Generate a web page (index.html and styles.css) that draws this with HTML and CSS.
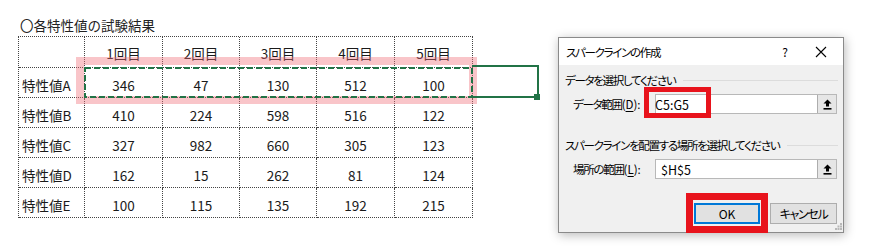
FILE: index.html
```html
<!DOCTYPE html>
<html lang="ja">
<head>
<meta charset="utf-8">
<link rel="stylesheet" href="styles.css">
</head>
<body>
<div class="page">
  <div class="sheet">
    <div class="title">〇各特性値の試験結果</div>
    <div class="table-wrap">
      <div class="grid">
        <div class="c h"></div><div class="c h n">1回目</div><div class="c h n">2回目</div><div class="c h n">3回目</div><div class="c h n">4回目</div><div class="c h n">5回目</div>
        <div class="c l">特性値A</div><div class="c n">346</div><div class="c n">47</div><div class="c n">130</div><div class="c n">512</div><div class="c n">100</div>
        <div class="c l">特性値B</div><div class="c n">410</div><div class="c n">224</div><div class="c n">598</div><div class="c n">516</div><div class="c n">122</div>
        <div class="c l">特性値C</div><div class="c n">327</div><div class="c n">982</div><div class="c n">660</div><div class="c n">305</div><div class="c n">123</div>
        <div class="c l">特性値D</div><div class="c n">162</div><div class="c n">15</div><div class="c n">262</div><div class="c n">81</div><div class="c n">124</div>
        <div class="c l">特性値E</div><div class="c n">100</div><div class="c n">115</div><div class="c n">135</div><div class="c n">192</div><div class="c n">215</div>
      </div>
      <div class="pink"></div>
      <svg class="sel" width="540" height="80" viewBox="0 0 540 80">
        <rect x="67" y="32" width="387" height="29" fill="none" stroke="#217346" stroke-width="2" stroke-dasharray="6 3"/>
        <polyline points="454,30 520,30 520,61 454,61" fill="none" stroke="#217346" stroke-width="2"/>
        <rect x="516" y="58" width="6" height="6" fill="#217346"/>
      </svg>
    </div>
  </div>

  <div class="dialog">
    <div class="titlebar">
      <span class="ttext jp">スパークラインの作成</span>
      <span class="help">?</span>
      <svg class="close" width="12" height="12" viewBox="0 0 12 12"><path d="M1 1L11 11M11 1L1 11" stroke="#000" stroke-width="1.1" fill="none"/></svg>
    </div>
    <div class="body">
      <div class="group">
        <span class="gtext jp">データを選択してください</span><span class="rule"></span>
      </div>
      <div class="frow">
        <span class="flabel"><span class="jp">データ範囲</span>(<u>D</u>):</span>
        <div class="field first">
          <span class="val">C5:G5</span>
          <span class="pick"><svg width="9" height="11" viewBox="0 0 9 11"><path d="M4.5 0.5L8.5 4.5H6V7.5H3V4.5H0.5Z" fill="#000"/><rect x="0.5" y="9" width="8" height="1.6" fill="#000"/></svg></span>
        </div>
      </div>
      <div class="group g2">
        <span class="gtext jp">スパークラインを配置する場所を選択してください</span><span class="rule"></span>
      </div>
      <div class="frow">
        <span class="flabel"><span class="jp">場所の範囲</span>(<u>L</u>):</span>
        <div class="field">
          <span class="val">$H$5</span>
          <span class="pick"><svg width="9" height="11" viewBox="0 0 9 11"><path d="M4.5 0.5L8.5 4.5H6V7.5H3V4.5H0.5Z" fill="#000"/><rect x="0.5" y="9" width="8" height="1.6" fill="#000"/></svg></span>
        </div>
      </div>
      <div class="buttons">
        <span class="btn ok">OK</span>
        <span class="btn"><span class="jp">キャンセル</span></span>
      </div>
      <svg class="grip" width="7" height="7" viewBox="0 0 7 7">
        <rect x="5" y="0" width="2" height="2" fill="#b8b8b8"/>
        <rect x="2.5" y="2.5" width="2" height="2" fill="#b8b8b8"/><rect x="5" y="2.5" width="2" height="2" fill="#b8b8b8"/>
        <rect x="0" y="5" width="2" height="2" fill="#b8b8b8"/><rect x="2.5" y="5" width="2" height="2" fill="#b8b8b8"/><rect x="5" y="5" width="2" height="2" fill="#b8b8b8"/>
      </svg>
    </div>
    <div class="mark mark1"></div>
    <div class="mark mark2"></div>
  </div>
</div>
</body>
</html>
```
FILE: styles.css
```css
* { box-sizing: border-box; }
html, body { margin: 0; padding: 0; background: #fff; }
body { width: 886px; height: 248px; overflow: hidden; font-family: "Noto Sans CJK JP", "Noto Sans", sans-serif; color: #000; }
.page { position: relative; width: 886px; height: 248px; }

.sheet { padding: 15px 0 0 18px; }
.title { font-size: 13.5px; line-height: 20px; height: 21px; padding-left: 2px; color: #222; }

.table-wrap { position: relative; width: 455px; }
.grid {
  display: grid;
  grid-template-columns: 66px 78px 77px 77px 78px 78px;
  grid-template-rows: 31px 30px 30px 30px 30px 30px;
  border-left: 1px dotted #444;
  border-top: 1px dotted #444;
  width: 455px;
}
.c {
  border-right: 1px dotted #444;
  border-bottom: 1px dotted #444;
  font-size: 13.5px;
  display: flex;
  align-items: center;
  padding-top: 5px;
  color: #1a1a1a;
}
.c.h { padding-top: 2px; }
.c.n { justify-content: center; }
.c.l { padding-left: 3px; }

.pink {
  position: absolute;
  left: 58px; top: 21px;
  width: 401px; height: 47px;
  border: 8px solid rgba(240, 110, 120, 0.4);
}
.sel { position: absolute; left: 0; top: 0; overflow: visible; }

.dialog {
  position: absolute;
  left: 558px; top: 37px;
  width: 286px; height: 196px;
  border: 1px solid #8a8a8a;
  background: #f0f0f0;
  box-shadow: 1px 2px 10px rgba(0, 0, 0, 0.28);
  font-family: "Noto Sans CJK JP", "Noto Sans", sans-serif;
  font-feature-settings: "palt";
  font-size: 11.5px;
  display: flex;
  flex-direction: column;
}
.jp { letter-spacing: -1.3px; }
.titlebar {
  height: 27px;
  background: #fff;
  display: flex;
  align-items: center;
  padding-left: 7px;
  flex: none;
}
.ttext { flex: 1; }
.help { width: 12px; margin-right: 24px; text-align: center; font-size: 12px; }
.close { margin-right: 16px; }

.body { position: relative; flex: 1; display: flex; flex-direction: column; padding: 7px 5px 0 6px; }
.group { display: flex; align-items: center; height: 16px; line-height: 16px; }
.g2 { margin-top: 23px; }
.gtext { flex: none; margin-right: 8px; }
.rule { flex: 1; height: 1px; background: #dcdcdc; }

.frow { display: flex; align-items: center; height: 20px; margin-top: 6px; padding-left: 8px; padding-right: 1px; }
.flabel { width: 82px; flex: none; }
.flabel u { text-decoration-thickness: 1px; text-underline-offset: 2px; }
.field {
  flex: 1;
  height: 20px;
  background: #fff;
  border: 1px solid #b8b8b8;
  display: flex;
  align-items: center;
}
.val { flex: 1; padding-left: 5px; font-size: 12.5px; }
.first .val { padding-left: 0; margin-left: -1px; }
.pick {
  width: 19px; height: 18px;
  background: #e6e6e6;
  border-left: 1px solid #adadad;
  display: flex; align-items: center; justify-content: center;
}

.buttons { display: flex; justify-content: flex-end; gap: 10px; margin-top: 24px; padding-right: 1px; }
.btn {
  width: 67px; height: 21px;
  background: #e1e1e1;
  border: 1px solid #adadad;
  display: flex; align-items: center; justify-content: center;
  font-size: 12px;
}
.btn.ok { width: 66px; border: 1px solid #0078d7; box-shadow: inset 0 0 0 1px #0078d7; }
.grip { position: absolute; right: 1px; bottom: 2px; }

.mark { position: absolute; border-style: solid; border-color: #e8131c; }
.mark1 { left: 85px; top: 49px; width: 67px; height: 31px; border-width: 5px; }
.mark2 { left: 127px; top: 155px; width: 82px; height: 40px; border-width: 7px; }
```
